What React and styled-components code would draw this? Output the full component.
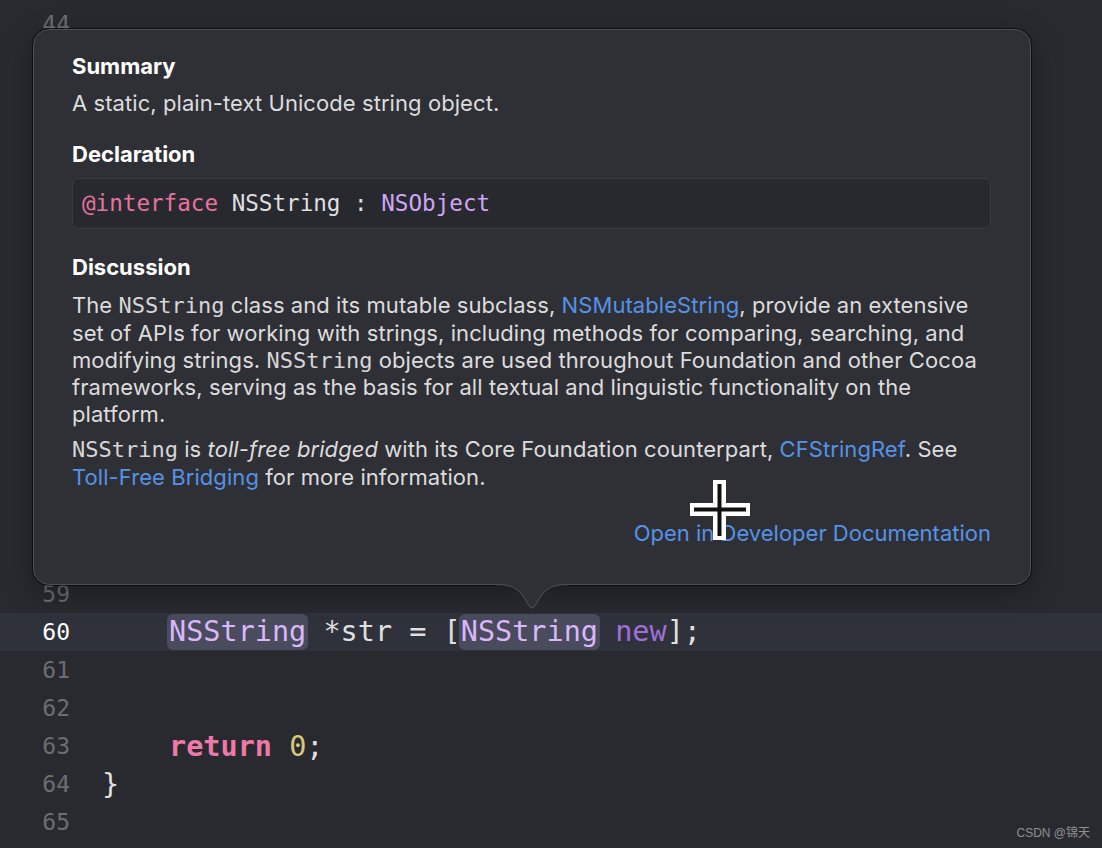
import React from 'react';
import styled, { createGlobalStyle } from 'styled-components';

const GlobalStyle = createGlobalStyle`
  html, body {
    margin: 0;
    padding: 0;
    background: #292a30;
  }
  body {
    width: 1102px;
    height: 848px;
    overflow: hidden;
  }
`;

/* Editor */
const Screen = styled.div`
  position: relative;
  width: 1102px;
  height: 848px;
  overflow: hidden;
  background: #292a30;
  font-family: Inter, "Noto Sans", sans-serif;
`;

const Editor = styled.div`
  display: flex;
  flex-direction: column;
  padding-top: 5px;
  font-family: "DejaVu Sans Mono", "Liberation Mono", monospace;
`;

const Line = styled.div`
  display: flex;
  align-items: center;
  height: 38px;
  flex: none;
  background: ${p => (p.$active ? '#2f323a' : 'transparent')};
`;

const LineNumber = styled.span`
  width: 70px;
  flex: none;
  text-align: right;
  font-size: 23px;
  color: ${p => (p.$active ? '#ffffff' : '#6c6d73')};
`;

const CodeText = styled.span`
  padding-left: ${p => (p.$indent ? 99 : 32)}px;
  font-size: 28.5px;
  white-space: pre;
  color: #dfdfe0;
`;

const tokenColors = {
  keyword: '#ee79a8',
  number: '#d9c97c',
  type: '#d8b8fb',
  method: '#a06fdc',
  plain: '#dfdfe0',
};

const Token = styled.span`
  color: ${p => tokenColors[p.$kind] || tokenColors.plain};
  font-weight: ${p => (p.$kind === 'keyword' ? 700 : 400)};
`;

const Ref = styled.span`
  display: inline-block;
  line-height: 36px;
  padding: 0 2px;
  margin: 0 -2px;
  border-radius: 6px;
  background: #4a4b5c;
  color: ${tokenColors.type};
`;

/* Popover */
const Popover = styled.div`
  position: absolute;
  left: 33px;
  top: 29px;
  width: 998px;
  height: 556px;
  box-sizing: border-box;
  padding: 22.5px 39px 0 38px;
  background: #2f3035;
  border: 1px solid #4d4e53;
  border-radius: 16px;
  box-shadow: 0 0 0 1px rgba(0, 0, 0, 0.55), 0 8px 28px rgba(0, 0, 0, 0.35);
  color: #dcdcde;
`;

const Heading = styled.div`
  font-size: 22px;
  font-weight: 700;
  line-height: 27px;
  color: #ffffff;
  margin-top: ${p => p.$gap || 0}px;
`;

const Text = styled.div`
  font-size: 22px;
  line-height: 27.3px;
  letter-spacing: 0.07px;
  white-space: nowrap;
  margin-top: ${p => p.$gap || 0}px;
`;

const Mono = styled.span`
  font-family: "DejaVu Sans Mono", "Liberation Mono", monospace;
  font-size: 22px;
  letter-spacing: 0;
  line-height: 1;
  color: #d6d6d8;
`;

const Link = styled.span`
  color: #5592e8;
`;

const Declaration = styled.div`
  margin-top: 10px;
  height: 51px;
  box-sizing: border-box;
  display: flex;
  align-items: center;
  padding-left: 9px;
  background: #28292e;
  border: 1px solid #3a3b40;
  border-radius: 7px;
  font-family: "DejaVu Sans Mono", "Liberation Mono", monospace;
  font-size: 22.6px;
  color: #dfdfe0;
  white-space: pre;
`;

const DeclKeyword = styled.span`
  color: #e6739f;
`;

const DeclType = styled.span`
  color: #cfa6f5;
`;

const Footer = styled.div`
  display: flex;
  justify-content: flex-end;
  margin-top: 29.5px;
  font-size: 22px;
  line-height: 27.3px;
`;

const Arrow = styled.svg`
  position: absolute;
  left: 462px;
  top: 100%;
  overflow: visible;
`;

const Cursor = styled.svg`
  position: absolute;
  left: 690px;
  top: 480px;
`;

const Watermark = styled.div`
  position: absolute;
  right: 12px;
  bottom: 8px;
  font-family: "Liberation Sans", "Noto Sans CJK SC", sans-serif;
  font-size: 12px;
  color: #8e8f93;
`;

const lines = [];
for (let n = 44; n <= 65; n++) lines.push(n);

function renderCode(n) {
  if (n === 60) {
    return (
      <>
        <Ref>NSString</Ref>
        <Token> *str = [</Token>
        <Ref>NSString</Ref>
        <Token> </Token>
        <Token $kind="method">new</Token>
        <Token>];</Token>
      </>
    );
  }
  if (n === 63) {
    return (
      <>
        <Token $kind="keyword">return</Token>
        <Token> </Token>
        <Token $kind="number">0</Token>
        <Token>;</Token>
      </>
    );
  }
  if (n === 64) return <Token>{'}'}</Token>;
  return null;
}

export default function App() {
  return (
    <Screen>
      <GlobalStyle />
      <Editor>
        {lines.map(n => (
          <Line key={n} $active={n === 60}>
            <LineNumber $active={n === 60}>{n}</LineNumber>
            <CodeText $indent={n === 60 || n === 63}>{renderCode(n)}</CodeText>
          </Line>
        ))}
      </Editor>

      <Popover>
        <Heading>Summary</Heading>
        <Text $gap={10}>A static, plain-text Unicode string object.</Text>

        <Heading $gap={24}>Declaration</Heading>
        <Declaration>
          <DeclKeyword>@interface</DeclKeyword> NSString : <DeclType>NSObject</DeclType>
        </Declaration>

        <Heading $gap={25.5}>Discussion</Heading>
        <Text $gap={11}>
          The <Mono>NSString</Mono> class and its mutable subclass, <Link>NSMutableString</Link>, provide an extensive
          <br />
          set of APIs for working with strings, including methods for comparing, searching, and
          <br />
          modifying strings. <Mono>NSString</Mono> objects are used throughout Foundation and other Cocoa
          <br />
          frameworks, serving as the basis for all textual and linguistic functionality on the
          <br />
          platform.
        </Text>
        <Text $gap={7.5}>
          <Mono>NSString</Mono> is <i>toll-free bridged</i> with its Core Foundation counterpart, <Link>CFStringRef</Link>. See
          <br />
          <Link>Toll-Free Bridging</Link> for more information.
        </Text>

        <Footer>
          <Link>Open in Developer Documentation</Link>
        </Footer>

        <Arrow width="72" height="26" viewBox="0 0 72 26">
          <path
            d="M0,-0.5 L72,-0.5 L72,1.5 C60,1.5 54,3 47,10 L38,23.5 Q36,25.5 34,23.5 L25,10 C18,3 12,1.5 0,1.5 Z"
            fill="#2f3035"
          />
          <path
            d="M0,0.5 C12,0.5 18,2 25,9 L34,23 Q36,25 38,23 L47,9 C54,2 60,0.5 72,0.5"
            fill="none"
            stroke="#4d4e53"
            strokeWidth="1"
          />
        </Arrow>
      </Popover>

      <Cursor width="60" height="60" viewBox="0 0 60 60">
        <rect x="23" y="0" width="13" height="60" fill="#ffffff" />
        <rect x="0" y="23" width="60" height="13" fill="#ffffff" />
        <rect x="27.5" y="4" width="4" height="52" fill="#111111" />
        <rect x="4" y="27.5" width="52" height="4" fill="#111111" />
      </Cursor>

      <Watermark>CSDN @锦天</Watermark>
    </Screen>
  );
}
